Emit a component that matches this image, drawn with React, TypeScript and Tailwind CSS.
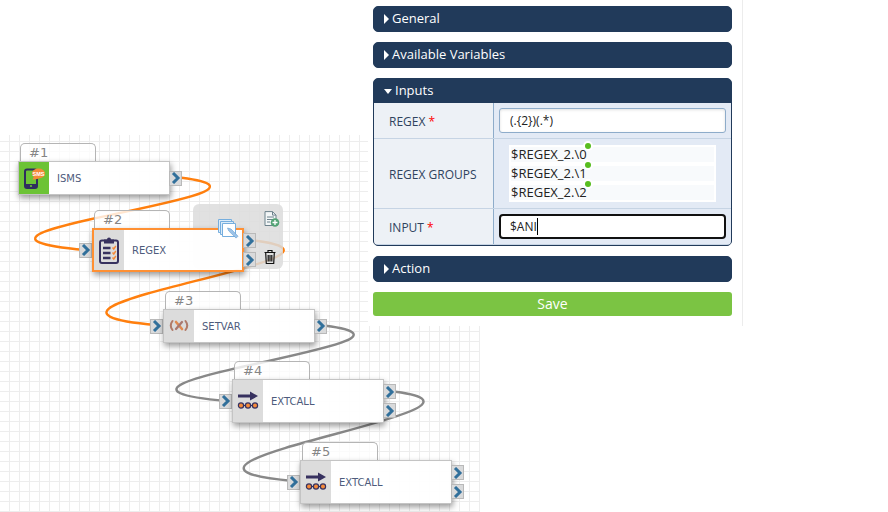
import { useState } from 'react';
import type { ReactNode } from 'react';

type Kind = 'sms' | 'regex' | 'setvar' | 'extcall';

interface FlowNode {
  id: number;
  label: string;
  kind: Kind;
  x: number;
  y: number;
  outputs: number;
  tall?: boolean;
  input?: boolean;
}

const NODES: FlowNode[] = [
  { id: 1, label: 'ISMS', kind: 'sms', x: 18, y: 26, outputs: 1 },
  { id: 2, label: 'REGEX', kind: 'regex', x: 92, y: 93, outputs: 2, tall: true, input: true },
  { id: 3, label: 'SETVAR', kind: 'setvar', x: 163, y: 174, outputs: 1, input: true },
  { id: 4, label: 'EXTCALL', kind: 'extcall', x: 232, y: 244, outputs: 2, tall: true, input: true },
  { id: 5, label: 'EXTCALL', kind: 'extcall', x: 300, y: 325, outputs: 2, tall: true, input: true },
];

const WIRES = [
  { from: [175, 42], to: [85, 115], color: '#ff7f0e' },
  { from: [249, 105], to: [156, 190], color: '#ff7f0e' },
  { from: [319, 190], to: [226, 266], color: '#888888' },
  { from: [389, 256], to: [293, 346], color: '#888888' },
];

function wirePath(from: number[], to: number[]) {
  return `M${from[0]} ${from[1]} C${from[0] + 158} ${from[1] + 17} ${to[0] - 193} ${to[1] - 17} ${to[0]} ${to[1]}`;
}

function NodeIcon({ kind }: { kind: Kind }) {
  if (kind === 'sms') {
    return (
      <svg className="w-6 h-6" viewBox="0 0 24 24">
        <rect x="3" y="3.500" width="12" height="18.500" rx="2" fill="none" stroke="#2f2d5f" strokeWidth="2" />
        <path d="M3 18h12v4H3z" fill="#2f2d5f" />
        <circle cx="9" cy="20" r="1.100" fill="#6cc335" />
        <path d="M10.500 13.500l2-4 4 3c-2 .8-3.500 1-6 1z" fill="#f58a3a" />
        <ellipse cx="16.500" cy="7.500" rx="6.500" ry="5" fill="#f58a3a" />
        <text x="16.500" y="9.700" textAnchor="middle" fontSize="5.500" fontWeight="700" fill="#fff" fontFamily="Liberation Sans, sans-serif">SMS</text>
      </svg>
    );
  }
  if (kind === 'regex') {
    return (
      <svg className="w-7 h-7 shrink-0" viewBox="0 0 28 28">
        <rect x="5" y="4.500" width="18" height="22.500" rx="2" fill="#dcdcdc" stroke="#37315f" strokeWidth="2" />
        <path d="M9 3.500h3a2 2 0 0 1 4 0h3v4H9z" fill="#37315f" />
        <path d="M8 12h7.500M8 17h7.500M8 22h7.500" stroke="#37315f" strokeWidth="2.400" />
        <path d="M17.500 11.500l1.300 1.500 2-3M17.500 16.500l1.300 1.500 2-3M17.500 21.500l1.300 1.500 2-3" fill="none" stroke="#f58a3a" strokeWidth="1.400" />
      </svg>
    );
  }
  if (kind === 'setvar') {
    return (
      <svg className="w-5 h-5" viewBox="0 0 20 20" fill="none" strokeLinecap="round">
        <path d="M3.500 5q-3.500 4.500 0 9M16.500 5q3.500 4.500 0 9" stroke="#b07a68" strokeWidth="2" />
        <path d="M7 6l6 7" stroke="#e08a50" strokeWidth="2.600" />
        <path d="M13 6l-6 7" stroke="#a87870" strokeWidth="2.300" />
      </svg>
    );
  }
  return (
    <svg className="w-6 h-6" viewBox="0 0 24 24">
      <path d="M2 5.500h12V2.500l8 4.500-8 4.500V8.500H2z" fill="#37315f" />
      <path d="M5 16.500h14" stroke="#37315f" strokeWidth="1.200" />
      <g fill="#f58a3a" stroke="#37315f" strokeWidth="1.200">
        <circle cx="5" cy="16.500" r="2.600" />
        <circle cx="12" cy="16.500" r="2.600" />
        <circle cx="19" cy="16.500" r="2.600" />
      </g>
    </svg>
  );
}

function Port() {
  return (
    <span className="flex items-center justify-center w-[13px] h-[15px] border border-[#b9b9b9] bg-[#d9dadb]">
      <svg className="w-2.5 h-3 shrink-0" viewBox="0 0 10 12" fill="none" stroke="#31709b" strokeWidth="3">
        <path d="M2 1l5 5-5 5" />
      </svg>
    </span>
  );
}

function NodeBox({ node, selected, onSelect }: { node: FlowNode; selected: boolean; onSelect: () => void }) {
  return (
    <div className="absolute" style={{ left: node.x, top: node.y }}>
      {/* Number tab */}
      <div className="absolute left-0.5 -top-[18px] w-[76px] h-5 pl-2 rounded-t-[5px] border border-b-0 border-[#b5b5b5] bg-white/80 text-[13px] leading-[17px] text-[#858585]">
        #{node.id}
      </div>
      {node.input && (
        <div className="absolute -left-[13px] inset-y-0 flex items-center">
          <Port />
        </div>
      )}
      <button
        onClick={onSelect}
        className={`relative flex items-stretch w-[152px] text-left bg-white/95 shadow-[1px_3px_6px_rgba(0,0,0,0.4)] ${
          node.tall ? 'h-11' : 'h-[34px]'
        } ${selected ? 'border-2 border-[#ff9033]' : 'border border-[#c4c4c4]'}`}
      >
        <span className={`flex items-center justify-center w-[30px] ${node.kind === 'sms' ? 'bg-[#6cc335]' : 'bg-[#dcdcdc]'}`}>
          <NodeIcon kind={node.kind} />
        </span>
        <span className="self-center pl-2 text-[10px] text-[#4e5b7c]">{node.label}</span>
      </button>
      <div className="absolute left-[151px] inset-y-0 flex flex-col justify-center gap-1">
        {Array.from({ length: node.outputs }, (_, i) => (
          <Port key={i} />
        ))}
      </div>
    </div>
  );
}

function NodeActions() {
  return (
    <>
      <button aria-label="Copy" className="absolute left-[218px] top-[84px]">
        <svg className="w-[21px] h-[21px]" viewBox="0 0 21 21">
          <g fill="#dcecf9" stroke="#76aede">
            <path d="M.5.500h13v13H.5z" />
            <path d="M2.500 2.500h13v13h-13z" />
            <path d="M4.500 4.500h13v13h-13z" fill="#fff" />
          </g>
          <path d="M9.500 9l3.500 1 7 7.200-1.900 1.900-7.200-7z" fill="#9cc3e8" stroke="#6fa5d5" strokeWidth=".7" />
        </svg>
      </button>
      <button aria-label="Add note" className="absolute left-[264px] top-[76px]">
        <svg className="w-4 h-4" viewBox="0 0 16 16">
          <path d="M1 .6h7.500l3.500 3.500V14.500H1z" fill="#f3f6f7" stroke="#6d828c" />
          <path d="M8.500.6v3.500H12M3 6h7M3 8.500h6M3 11h3" fill="none" stroke="#6d828c" />
          <circle cx="11" cy="11.500" r="4.300" fill="#52a274" />
          <path d="M11 9v5M8.500 11.500h5" stroke="#fff" strokeWidth="1.300" />
        </svg>
      </button>
      <button aria-label="Delete" className="absolute left-[264px] top-[114px]">
        <svg className="w-3 h-4" viewBox="0 0 12 16" fill="none" stroke="#111" strokeWidth="1.200">
          <path d="M.5 3.500h11M4 3V1.500h4V3M1.700 4l.6 10.500h7.400L10.300 4M4.200 6v6.500M6 6v6.500M7.800 6v6.500" />
        </svg>
      </button>
    </>
  );
}

function FlowCanvas() {
  const [selected, setSelected] = useState(2);

  return (
    <section className="relative col-span-full col-start-1 row-start-1 mt-[135px] w-[480px] min-h-[377px] overflow-hidden font-['DejaVu_Sans',sans-serif] bg-[linear-gradient(to_right,#ededed_1px,transparent_1px),linear-gradient(to_bottom,#ededed_1px,transparent_1px)] bg-[size:10px_10px] bg-[position:9px_6px]">
      <svg className="absolute inset-0 w-full h-full" fill="none" strokeWidth="2.400">
        {WIRES.map((wire, i) => (
          <path key={i} d={wirePath(wire.from, wire.to)} stroke={wire.color} />
        ))}
      </svg>
      <div className="absolute left-[193px] top-[69px] w-[90px] h-[65px] rounded-md bg-[#dcdcdc]/85" />
      {NODES.map((node) => (
        <NodeBox key={node.id} node={node} selected={selected === node.id} onSelect={() => setSelected(node.id)} />
      ))}
      <NodeActions />
    </section>
  );
}

function Panel({ title, open, children }: { title: string; open?: boolean; children?: ReactNode }) {
  return (
    <section className="rounded-[5px] overflow-hidden border border-[#213a5a] bg-[#213a5a]">
      <button className="flex items-center w-full h-6 pl-2.5 gap-[3px] text-[13px] font-medium text-white">
        {open ? (
          <svg className="w-2 h-[5px] shrink-0" viewBox="0 0 8 5" fill="#fff">
            <path d="M0 0h8L4 5z" />
          </svg>
        ) : (
          <svg className="w-[5px] h-2.5 shrink-0" viewBox="0 0 5 10" fill="#fff">
            <path d="M0 0l5 5-5 5z" />
          </svg>
        )}
        {title}
      </button>
      {children}
    </section>
  );
}

function Field({ label, id, required, children }: { label: string; id?: string; required?: boolean; children: ReactNode }) {
  const text = (
    <>
      {label} {required && <span className="text-[#ff0000]">*</span>}
    </>
  );
  return (
    <div className="grid grid-cols-[120px_1fr] border-b border-[#c6d4e4]">
      <div className="flex items-center pl-[15px] pt-0.5 border-r border-[#8eacca] bg-[#edf1f6] text-[12px] text-[#2f435e]">
        {id ? <label htmlFor={id}>{text}</label> : <span>{text}</span>}
      </div>
      <div className="px-[5px] py-[5px] bg-[#e3eaf5]">{children}</div>
    </div>
  );
}

const GROUPS = ['$REGEX_2.\\0', '$REGEX_2.\\1', '$REGEX_2.\\2'];

export default function App() {
  const [regex, setRegex] = useState('(.{2})(.*)');
  const [input, setInput] = useState('$ANI');

  return (
    <main className="grid grid-cols-[368px_minmax(0,375px)_1fr] min-h-screen bg-white">
      <FlowCanvas />

      {/* Properties */}
      <aside className="relative z-10 col-start-2 row-start-1 self-start flex flex-col gap-2.5 pt-1.5 pb-2.5 pl-[5px] pr-2.5 border-r border-[#ececec] bg-white font-['Open_Sans',sans-serif]">
        <Panel title="General" />
        <Panel title="Available Variables" />
        <Panel title="Inputs" open>
          <Field label="REGEX" id="regex" required>
            <input
              id="regex"
              value={regex}
              onChange={(e) => setRegex(e.target.value)}
              className="block w-full h-[25px] px-2.5 rounded-[3px] border border-[#8eacca] bg-white text-[12px] text-[#222] shadow-[inset_0_1px_3px_rgba(0,0,0,0.12)]"
            />
          </Field>
          <Field label="REGEX GROUPS">
            <ul className="mx-2.5 my-px bg-white">
              {GROUPS.map((group) => (
                <li key={group} className="h-[19px] px-0.5 py-0.5">
                  <div className="h-[15px] bg-[#f8fafc] text-[13px] leading-[15px] text-[#222]">
                    <span className="relative inline-block">
                      {group}
                      <span className="absolute -right-1 -top-1 w-1.5 h-1.5 rounded-full bg-[#58bd1f] ring-2 ring-white" />
                    </span>
                  </div>
                </li>
              ))}
            </ul>
          </Field>
          <Field label="INPUT" id="input" required>
            <div className="relative">
              <input
                id="input"
                value={input}
                onChange={(e) => setInput(e.target.value)}
                className="block w-full h-[25px] px-[9px] rounded-[4px] border-2 border-[#111] bg-white text-[12px] text-[#222] outline-none"
              />
              <span className="absolute left-[38px] top-1 w-px h-[17px] bg-black" />
            </div>
          </Field>
        </Panel>
        <Panel title="Action" />
        <button className="h-6 rounded-[3px] bg-[#7bc443] text-[14px] leading-6 font-medium text-white">Save</button>
      </aside>
    </main>
  );
}
